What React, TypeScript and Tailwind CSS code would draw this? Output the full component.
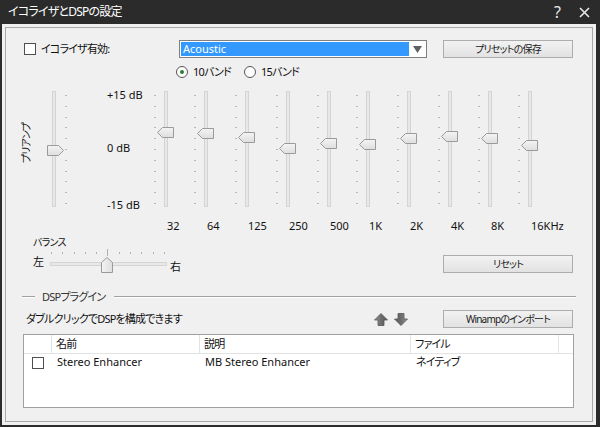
import React from 'react'

type Band = { label: string; gain: number; gap: string }

const bands: Band[] = [
  { label: '32', gain: 4.6, gap: '' },
  { label: '64', gain: 4.4, gap: 'ml-[20px]' },
  { label: '125', gain: 3.4, gap: 'ml-[21px]' },
  { label: '250', gain: 0.3, gap: 'ml-[21px]' },
  { label: '500', gain: 1.7, gap: 'ml-[21px]' },
  { label: '1K', gain: 1.5, gap: 'ml-[19px]' },
  { label: '2K', gain: 3.1, gap: 'ml-[21px]' },
  { label: '4K', gain: 3.7, gap: 'ml-[21px]' },
  { label: '8K', gain: 3.1, gap: 'ml-[20px]' },
  { label: '16KHz', gain: 1.2, gap: 'ml-[20px]' },
]

// px offset of the thumb inside a 118px slider for a gain in dB
const thumbTop = (gain: number) => Math.round(54 - gain * 3.6)

// japanese labels: the reference font is a narrow UI face, so squeeze a bit
const jp = 'tracking-[-0.8px] whitespace-nowrap'

function Ticks({ className = '' }: { className?: string }) {
  return (
    <div className={`flex h-[109px] flex-col justify-between ${className}`}>
      {Array.from({ length: 11 }).map((_, i) => (
        <div key={i} className="h-px w-[2px] bg-[#b9b9b9]" />
      ))}
    </div>
  )
}

function Thumb({ dir, top, className = '' }: { dir: 'left' | 'right'; top: number; className?: string }) {
  const d =
    dir === 'left'
      ? 'M0.5 5.5 L5.5 0.5 H16.5 V10.5 H5.5 Z'
      : 'M16.5 5.5 L11.5 0.5 H0.5 V10.5 H11.5 Z'
  return (
    <svg width="17" height="11" viewBox="0 0 17 11" className={`absolute ${className}`} style={{ top }}>
      <defs>
        <linearGradient id={`th-${dir}`} x1="0" y1="0" x2="0" y2="1">
          <stop offset="0" stopColor="#f4f4f4" />
          <stop offset="1" stopColor="#dedede" />
        </linearGradient>
      </defs>
      <path d={d} fill={`url(#th-${dir})`} stroke="#9a9a9a" />
    </svg>
  )
}

function Track() {
  return <div className="absolute top-[1px] bottom-[1px] w-[4px] border border-[#d4d4d4] bg-[#e8e8e8]" />
}

function Checkbox() {
  return <div className="h-[12px] w-[12px] border border-[#4f4f4f] bg-white" />
}

function Button({ children }: { children: React.ReactNode }) {
  return (
    <div
      className={`flex h-[18px] w-[130px] items-center justify-center border border-[#adadad] bg-gradient-to-b from-[#f2f2f2] to-[#e2e2e2] text-[10px] text-[#1a1a1a] ${jp}`}
    >
      {children}
    </div>
  )
}

function Arrow({ up }: { up?: boolean }) {
  return (
    <svg width="14" height="13" viewBox="0 0 14 13" className={up ? '' : 'rotate-180'}>
      <defs>
        <linearGradient id={up ? 'ar-up' : 'ar-dn'} x1="0" y1="0" x2="1" y2="0">
          <stop offset="0" stopColor="#9a9a9a" />
          <stop offset="0.5" stopColor="#6c6c6c" />
          <stop offset="1" stopColor="#5a5a5a" />
        </linearGradient>
      </defs>
      <path d="M7 0.5 L13.5 7 H10 V12.5 H4 V7 H0.5 Z" fill={`url(#${up ? 'ar-up' : 'ar-dn'})`} stroke="#555" strokeWidth="0.8" />
    </svg>
  )
}

export default function App() {
  return (
    <div className="flex h-[427px] w-[600px] flex-col bg-[#2b2b2b] font-['Noto_Sans','Noto_Sans_CJK_JP',sans-serif] text-[11px] text-[#111] [font-feature-settings:'palt']">
      <div className="flex h-[24px] items-center pl-[8px] pr-[10px] text-white">
        <span className={`flex-1 text-[12px] leading-none ${jp}`}>イコライザとDSPの設定</span>
        <span className="mr-[18px] text-[16px] leading-none text-[#e8e8e8]">?</span>
        <svg width="11" height="11" viewBox="0 0 11 11">
          <path d="M1 1 L10 10 M10 1 L1 10" stroke="#e8e8e8" strokeWidth="1.6" />
        </svg>
      </div>

      <div className="mb-[2px] ml-[2px] mr-[4px] flex-1 bg-[#f0f0f0] p-[3px]">
        <div className="flex h-full flex-col border border-[#a8a8a8]">
          {/* preset row */}
          <div className="mt-[12px] flex h-[18px] items-center">
            <div className="ml-[18px] flex w-[155px] items-center gap-[5px]">
              <Checkbox />
              <span className={jp}>イコライザ有効:</span>
            </div>
            <div className="flex h-[18px] w-[248px] items-center border border-[#7f7f7f] bg-white p-[1px]">
              <div className="flex h-full flex-1 items-center bg-[#3399ff] pl-[2px] text-white">Acoustic</div>
              <div className="flex w-[16px] justify-center">
                <svg width="9" height="7" viewBox="0 0 9 7">
                  <path d="M0 0 H9 L4.5 7 Z" fill="#606060" />
                </svg>
              </div>
            </div>
            <div className="ml-[16px]">
              <Button>プリセットの保存</Button>
            </div>
          </div>

          {/* band count */}
          <div className="mt-[7px] ml-[170px] flex h-[14px] items-center">
            <div className="flex w-[68px] items-center gap-[5px]">
              <div className="flex h-[12px] w-[12px] items-center justify-center rounded-full border border-[#555] bg-white">
                <div className="h-[4px] w-[4px] rounded-full bg-[#2f7d32]" />
              </div>
              <span className={jp}>10バンド</span>
            </div>
            <div className="flex items-center gap-[5px]">
              <div className="h-[12px] w-[12px] rounded-full border border-[#555] bg-white" />
              <span className={jp}>15バンド</span>
            </div>
          </div>

          {/* sliders */}
          <div className="mt-[11px] flex items-start">
            <div className="mt-[30px] ml-[14px] flex h-[47px] w-[12px] items-center justify-center">
              <span
                className={`rotate-180 text-[10px] leading-none [text-orientation:sideways] [writing-mode:vertical-rl] ${jp}`}
              >
                プリアンプ
              </span>
            </div>
            <div className="relative ml-[15px] h-[118px] w-[20px]">
              <div className="absolute left-[5px] top-0 h-full">
                <Track />
              </div>
              <Ticks className="absolute left-[18px] top-[5px]" />
              <Thumb dir="right" top={55} className="left-0" />
            </div>
            <div className="ml-[40px] flex w-[47px] flex-col leading-[14px]">
              <span className="-mt-[2px]">+15 dB</span>
              <span className="mt-[39px]">0 dB</span>
              <span className="mt-[43px]">-15 dB</span>
            </div>
            {bands.map((b) => (
              <div key={b.label} className={`flex w-[20px] flex-col ${b.gap}`}>
                <div className="relative h-[118px] w-[20px]">
                  <Ticks className="absolute left-0 top-[5px]" />
                  <div className="absolute left-[10px] top-0 h-full">
                    <Track />
                  </div>
                  <Thumb dir="left" top={thumbTop(b.gain)} className="left-[3px]" />
                </div>
                <span className="mt-[10px] ml-[13px] whitespace-nowrap leading-4">{b.label}</span>
              </div>
            ))}
          </div>

          {/* balance */}
          <div className="flex items-start">
            <div className="ml-[27px] flex flex-col">
              <span className={`mt-[1px] text-[10px] leading-[14px] ${jp}`}>バランス</span>
              <div className="flex h-[25px] items-start">
                <span className="mt-[6px] w-[17px] leading-[14px]">左</span>
                <div className="relative h-[25px] w-[117px]">
                  <div className="absolute left-[1px] top-0 flex h-[7px] w-[114px] items-center justify-between">
                    {Array.from({ length: 11 }).map((_, i) => (
                      <div key={i} className={`w-px bg-[#b0b0b0] ${i === 5 ? 'h-[7px]' : 'h-[2px]'}`} />
                    ))}
                  </div>
                  <div className="absolute left-0 right-0 top-[13px] h-[4px] border border-[#d4d4d4] bg-[#e8e8e8]" />
                  <svg width="12" height="16" viewBox="0 0 12 16" className="absolute left-[51px] top-[8px]">
                    <defs>
                      <linearGradient id="bal" x1="0" y1="0" x2="1" y2="0">
                        <stop offset="0" stopColor="#f4f4f4" />
                        <stop offset="1" stopColor="#dedede" />
                      </linearGradient>
                    </defs>
                    <path d="M6 0.5 L11.5 5.5 V15.5 H0.5 V5.5 Z" fill="url(#bal)" stroke="#9a9a9a" />
                  </svg>
                </div>
                <span className="mt-[11px] ml-[3px] leading-[14px]">右</span>
              </div>
            </div>
            <div className="mt-[21px] mr-[19px] ml-auto">
              <Button>リセット</Button>
            </div>
          </div>

          {/* DSP group */}
          <div className="mt-[16px] flex h-[14px] items-center">
            <div className="ml-[16px] h-[2px] w-[13px] border-t border-b border-t-[#a0a0a0] border-b-white" />
            <span className={`ml-[7px] leading-[14px] text-[#333] ${jp}`}>DSPプラグイン</span>
            <div className="mr-[16px] ml-[9px] h-[2px] flex-1 border-t border-b border-t-[#a0a0a0] border-b-white" />
          </div>

          <div className="mt-[6px] flex h-[18px] items-center">
            <span className={`ml-[20px] flex-1 ${jp}`}>ダブルクリックでDSPを構成できます</span>
            <div className="flex items-center gap-[6px]">
              <Arrow up />
              <Arrow />
            </div>
            <div className="mr-[19px] ml-[35px]">
              <Button>Winampのインポート</Button>
            </div>
          </div>

          {/* plugin list */}
          <div className="mt-[6px] mr-[18px] ml-[17px] h-[74px] border border-[#a0a0a0] bg-white">
            <div className="flex h-[19px] items-center border-b border-[#e3e3e3]">
              <div className="h-full w-[28px] border-r border-[#e3e3e3]" />
              <div className={`flex h-full w-[148px] items-center border-r border-[#e3e3e3] pl-[4px] ${jp}`}>名前</div>
              <div className={`flex h-full w-[211px] items-center border-r border-[#e3e3e3] pl-[4px] ${jp}`}>説明</div>
              <div className={`flex h-full w-[148px] items-center border-r border-[#e3e3e3] pl-[4px] ${jp}`}>ファイル</div>
            </div>
            <div className="flex h-[17px] items-center">
              <div className="flex w-[28px] justify-center">
                <Checkbox />
              </div>
              <div className="w-[148px] pl-[5px]">Stereo Enhancer</div>
              <div className="w-[211px] pl-[5px]">MB Stereo Enhancer</div>
              <div className={`pl-[5px] ${jp}`}>ネイティブ</div>
            </div>
          </div>
        </div>
      </div>
    </div>
  )
}
